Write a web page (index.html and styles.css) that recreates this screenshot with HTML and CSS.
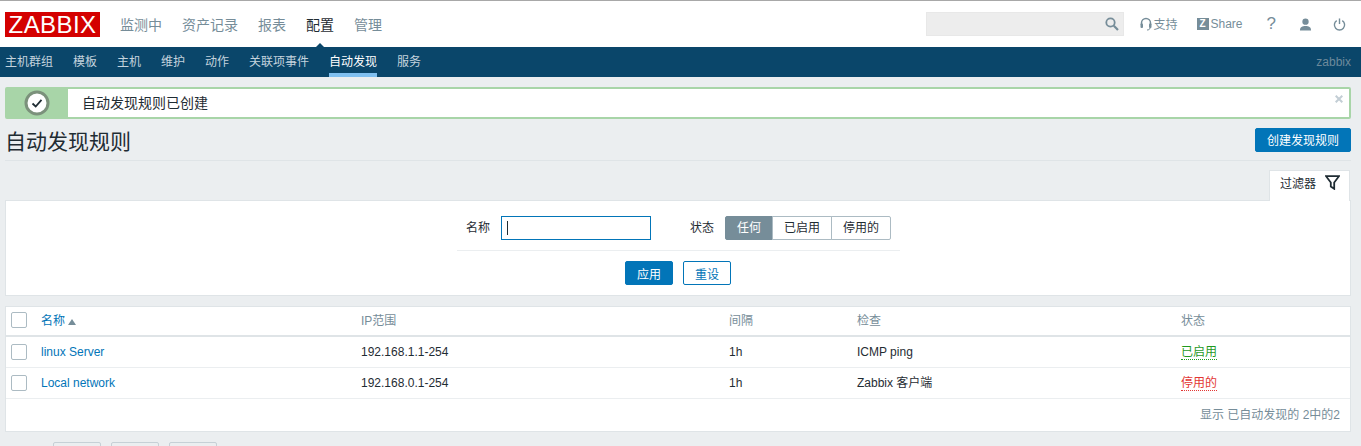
FILE: index.html
```html
<!DOCTYPE html>
<html lang="zh-CN">
<head>
  <meta charset="UTF-8" />
  <title>自动发现规则</title>
  <link rel="stylesheet" href="styles.css">
</head>
<body>

<header class="topbar">
  <div class="logo">ZABBIX</div>
  <nav class="mainnav">
    <a>监测中</a>
    <a>资产记录</a>
    <a>报表</a>
    <a class="active">配置</a>
    <a>管理</a>
  </nav>
  <div class="tools">
    <div class="search">
      <svg width="16" height="16" viewBox="0 0 16 16"><circle cx="6.5" cy="6.5" r="4.2" fill="none" stroke="#768d99" stroke-width="1.8"/><path d="M9.8 9.8 14 14" stroke="#768d99" stroke-width="2.2"/></svg>
    </div>
    <a class="tool support">
      <svg width="12" height="14" viewBox="0 0 12 14"><path d="M1.5 8V6a4.5 4.5 0 0 1 9 0v2" fill="none" stroke="#768d99" stroke-width="1.5"/><rect x="0.5" y="6.5" width="2.5" height="4.5" rx="1" fill="#768d99"/><rect x="9" y="6.5" width="2.5" height="4.5" rx="1" fill="#768d99"/><path d="M10 11c0 1.500-1.500 2-3 2" fill="none" stroke="#768d99" stroke-width="1"/></svg>
      <span class="tool-text">支持</span>
    </a>
    <a class="tool share"><span class="zbox">Z</span>Share</a>
    <a class="tool help">?</a>
    <a class="tool user">
      <svg width="13" height="13" viewBox="0 0 14 14"><circle cx="7" cy="4" r="3.400" fill="#768d99"/><path d="M1 13.500c0-4 2.500-5 6-5s6 1 6 5z" fill="#768d99"/></svg>
    </a>
    <a class="tool power">
      <svg width="13" height="13" viewBox="0 0 14 14"><path d="M4 2.800a5.500 5.500 0 1 0 6 0" fill="none" stroke="#768d99" stroke-width="1.500"/><path d="M7 .5v6" stroke="#768d99" stroke-width="1.500"/></svg>
    </a>
  </div>
</header>

<nav class="subnav">
  <a>主机群组</a>
  <a>模板</a>
  <a>主机</a>
  <a>维护</a>
  <a>动作</a>
  <a>关联项事件</a>
  <a class="active">自动发现</a>
  <a>服务</a>
  <span class="username">zabbix</span>
</nav>

<main class="page">
  <div class="msg-good">
    <div class="msg-icon">
      <svg width="26" height="26" viewBox="0 0 26 26"><circle cx="13" cy="13" r="11" fill="#fff" stroke="#7b917b" stroke-width="3"/><path d="M8.500 13.500 11.700 16.500 17.500 9.800" fill="none" stroke="#1f2c33" stroke-width="1.800"/></svg>
    </div>
    <div class="msg-text">自动发现规则已创建</div>
    <svg class="msg-close" width="8" height="8" viewBox="0 0 8 8"><path d="M.7.700l6.600 6.600M7.300.700.7 7.300" stroke="#c3ced5" stroke-width="2"/></svg>
  </div>

  <div class="title-row">
    <h1>自动发现规则</h1>
    <button class="btn-main">创建发现规则</button>
  </div>

  <div class="filter-tabs">
    <div class="filter-tab">
      过滤器
      <svg width="15" height="15" viewBox="0 0 15 15"><path d="M1 1.200h13L9.200 7.500v6.300L5.800 11.500V7.500z" fill="none" stroke="#1f2c33" stroke-width="1.800"/></svg>
    </div>
  </div>

  <section class="filter">
    <div class="filter-fields">
      <label>名称</label>
      <div class="name-input"><span class="caret"></span></div>
      <label class="status-label">状态</label>
      <div class="segments">
        <span class="seg on">任何</span>
        <span class="seg">已启用</span>
        <span class="seg">停用的</span>
      </div>
    </div>
    <div class="filter-buttons">
      <button class="btn-main">应用</button>
      <button class="btn-alt">重设</button>
    </div>
  </section>

  <section class="list">
    <table>
      <thead>
        <tr>
          <th class="col-check"><span class="checkbox"></span></th>
          <th class="col-name"><a>名称</a><span class="sort-up"></span></th>
          <th class="col-ip">IP范围</th>
          <th class="col-delay">间隔</th>
          <th class="col-checks">检查</th>
          <th>状态</th>
        </tr>
      </thead>
      <tbody>
        <tr>
          <td><span class="checkbox"></span></td>
          <td><a>linux Server</a></td>
          <td>192.168.1.1-254</td>
          <td>1h</td>
          <td>ICMP ping</td>
          <td><a class="enabled">已启用</a></td>
        </tr>
        <tr>
          <td><span class="checkbox"></span></td>
          <td><a>Local network</a></td>
          <td>192.168.0.1-254</td>
          <td>1h</td>
          <td>Zabbix 客户端</td>
          <td><a class="disabled">停用的</a></td>
        </tr>
      </tbody>
    </table>
    <div class="paging">显示 已自动发现的 2中的2</div>
  </section>

  <div class="actions">
    <button class="btn-off"></button>
    <button class="btn-off"></button>
    <button class="btn-off"></button>
  </div>
</main>

</body>
</html>
```

FILE: styles.css
```css
html, body {
  height: 446px;
  overflow: hidden;
}
body {
  margin: 0;
  background: #ebeef0;
  color: #1f2c33;
  font-family: "Liberation Sans", "Noto Sans CJK SC", sans-serif;
  font-size: 12px;
}
a {
  text-decoration: none;
}
button {
  font: inherit;
  box-sizing: border-box;
  height: 24px;
  border-radius: 2px;
  cursor: pointer;
}

/* top header */
.topbar {
  display: flex;
  align-items: center;
  height: 46px;
  background: #fff;
  border-top: 1px solid #a8a8a8;
}
.logo {
  width: 95px;
  height: 25px;
  margin-left: 5px;
  margin-top: 1px;
  background: #d40000;
  color: #fff;
  font-size: 24px;
  line-height: 26px;
  text-align: center;
  letter-spacing: .4px;
}
.mainnav {
  display: flex;
  gap: 20px;
  margin-left: 20px;
  font-size: 14px;
}
.mainnav a {
  color: #768d99;
  position: relative;
}
.mainnav a.active {
  color: #1f2c33;
}
.mainnav a.active::after {
  content: "";
  position: absolute;
  left: 50%;
  top: 29px;
  margin-left: -8px;
  border: 8px solid transparent;
  border-top: 0;
  border-bottom-color: #0a466a;
}
.tools {
  display: flex;
  align-items: center;
  margin-left: auto;
  color: #768d99;
}
.search {
  box-sizing: border-box;
  display: flex;
  align-items: center;
  justify-content: flex-end;
  width: 198px;
  height: 24px;
  padding-right: 3px;
  background: #ededed;
  border: 1px solid #e8e8e8;
}
.tool {
  display: flex;
  align-items: center;
  color: #768d99;
}
.support {
  gap: 1px;
  margin-left: 16px;
}
.tool-text {
  margin-top: -2px;
}
.share {
  margin-left: 19px;
}
.zbox {
  width: 12px;
  height: 12px;
  margin-right: 2px;
  background: #768d99;
  color: #fff;
  font-size: 10px;
  font-weight: bold;
  line-height: 12px;
  text-align: center;
}
.help {
  margin-left: 24px;
  font-size: 17px;
}
.user {
  margin-left: 23px;
}
.power {
  margin-left: 21px;
  margin-right: 15px;
}

/* second level menu */
.subnav {
  display: flex;
  gap: 20px;
  height: 30px;
  padding: 0 10px 0 5px;
  background: #0a466a;
  line-height: 30px;
}
.subnav a {
  color: #c4d3dd;
}
.subnav a.active {
  box-sizing: border-box;
  height: 30px;
  color: #fff;
  border-bottom: 4px solid #80c0f0;
}
.username {
  margin-left: auto;
  color: #6d8a9c;
}

.page {
  padding: 10px 10px 0 5px;
}

/* success message */
.msg-good {
  box-sizing: border-box;
  display: flex;
  position: relative;
  height: 32px;
  background: #fff;
  border: 2px solid #a8d5a8;
  border-radius: 2px;
}
.msg-icon {
  box-sizing: border-box;
  display: flex;
  align-items: center;
  justify-content: center;
  width: 61px;
  padding-right: 2px;
  background: #a8d5a8;
}
.msg-text {
  padding-left: 14px;
  font-size: 14px;
  line-height: 29px;
}
.msg-close {
  position: absolute;
  right: 6px;
  top: 6px;
}

.title-row {
  display: flex;
  align-items: center;
  justify-content: space-between;
  height: 41px;
  border-bottom: 1px solid #dfe4e7;
}
h1 {
  margin: 0;
  font-size: 21px;
  font-weight: normal;
}
.btn-main {
  padding: 0 11px;
  background: #0275b8;
  border: 1px solid #0275b8;
  color: #fff;
}
.btn-alt {
  padding: 0 11px;
  background: #fff;
  border: 1px solid #0275b8;
  color: #0275b8;
}

/* filter */
.filter-tabs {
  display: flex;
  justify-content: flex-end;
  margin-top: 9px;
  padding-right: 1px;
}
.filter-tab {
  box-sizing: border-box;
  display: flex;
  align-items: flex-start;
  gap: 9px;
  width: 81px;
  height: 31px;
  margin-bottom: -1px;
  padding: 3px 0 0 10px;
  background: #fff;
  border: 1px solid #dfe4e7;
  border-bottom: 0;
  position: relative;
}
.filter-tab svg {
  margin-top: 1px;
}
.filter {
  box-sizing: border-box;
  height: 96px;
  background: #fff;
  border: 1px solid #dfe4e7;
}
.filter-fields {
  box-sizing: border-box;
  display: flex;
  align-items: flex-start;
  width: 443px;
  height: 50px;
  margin-left: 451px;
  padding: 15px 0 0 9px;
  border-bottom: 1px solid #ebeef0;
}
.filter-fields label {
  line-height: 24px;
}
.name-input {
  box-sizing: border-box;
  display: flex;
  align-items: center;
  width: 150px;
  height: 24px;
  margin-left: 11px;
  padding-left: 5px;
  border: 1px solid #0275b8;
}
.caret {
  width: 1px;
  height: 14px;
  background: #1f2c33;
}
.filter-fields .status-label {
  margin-left: 39px;
}
.segments {
  display: flex;
  margin-left: 11px;
}
.seg {
  box-sizing: border-box;
  height: 24px;
  padding: 0 11px;
  line-height: 23px;
  background: #fff;
  border: 1px solid #acbbc3;
  margin-left: -1px;
}
.seg:first-child {
  margin-left: 0;
  border-radius: 2px 0 0 2px;
}
.seg:last-child {
  border-radius: 0 2px 2px 0;
}
.seg.on {
  background: #768d99;
  border-color: #768d99;
  color: #fff;
}
.filter-buttons {
  display: flex;
  justify-content: center;
  gap: 10px;
  margin-top: 10px;
}

/* list table */
.list {
  box-sizing: border-box;
  height: 126px;
  margin-top: 10px;
  background: #fff;
  border: 1px solid #dfe4e7;
}
table {
  width: 100%;
  border-collapse: collapse;
  table-layout: fixed;
  line-height: 14px;
}
th {
  height: 25px;
  padding: 0 5px 1px;
  color: #768d99;
  font-weight: normal;
  text-align: left;
  border-bottom: 2px solid #dfe4e7;
}
th.col-check {
  padding-bottom: 3px;
}
td {
  height: 30px;
  padding: 0 5px;
  border-bottom: 1px solid #ebeef0;
}
th a, td a {
  color: #0275b8;
}
.col-check { width: 20px; }
.col-name { width: 310px; }
.col-ip { width: 358px; }
.col-delay { width: 118px; }
.col-checks { width: 314px; }
.checkbox {
  display: block;
  box-sizing: border-box;
  width: 16px;
  height: 16px;
  background: #fff;
  border: 1px solid #acbbc3;
  border-radius: 2px;
}
.sort-up {
  display: inline-block;
  margin-left: 3px;
  border: 4px solid transparent;
  border-top: 0;
  border-bottom: 6px solid #768d99;
}
td a.enabled {
  color: #1f9a1f;
  border-bottom: 1px dotted #1f9a1f;
}
td a.disabled {
  color: #e33734;
  border-bottom: 1px dotted #e33734;
}
.paging {
  padding: 6px 10px 0 0;
  color: #768d99;
  text-align: right;
}

.actions {
  display: flex;
  gap: 10px;
  margin-top: 10px;
  margin-left: 48px;
}
.btn-off {
  width: 48px;
  background: #ebeef0;
  border: 1px solid #c6d0d6;
}
```
